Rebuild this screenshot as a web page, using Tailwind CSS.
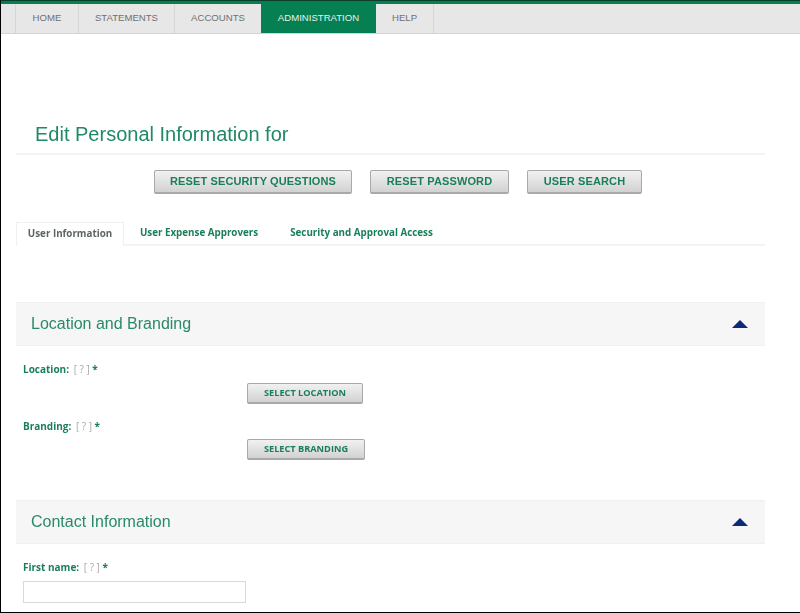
<!DOCTYPE html>
<html lang="en">
<head>
  <meta charset="UTF-8" />
  <title>Edit Personal Information</title>
  <script src="https://cdn.jsdelivr.net/npm/@tailwindcss/browser@4"></script>
</head>
<body class="bg-white">
  <div class="w-[800px] h-[613px] overflow-hidden flex flex-col border-l border-b border-t border-l-black border-b-black border-t-[#0a3d28] font-['Liberation_Sans',sans-serif] blur-[0.35px]">

    <!-- top nav -->
    <div class="border-t-[3px] border-[#067f53] shrink-0">
      <nav class="flex h-[30px] pl-[14px] bg-[#e7e7e7] border-b border-[#d4d4d4] text-[9.6px] text-[#707070]">
        <a class="w-[63px] flex items-center justify-center border-l border-[#d6d6d6]">HOME</a>
        <a class="w-[96px] flex items-center justify-center border-l border-[#d6d6d6]">STATEMENTS</a>
        <a class="w-[87px] flex items-center justify-center border-l border-[#d6d6d6]">ACCOUNTS</a>
        <a class="w-[115px] flex items-center justify-center bg-[#067f53] text-[#e4f3ec]">ADMINISTRATION</a>
        <a class="w-[58px] flex items-center justify-center border-r border-[#d6d6d6]">HELP</a>
      </nav>
    </div>

    <main class="w-[749px] ml-[15px]">
      <h1 class="mt-[88px] pl-[19px] h-[33px] border-b-2 border-[#f3f3f3] text-[20px] leading-[24px] text-[#1f8a63]">Edit Personal Information for</h1>

      <div class="flex mt-[15px] ml-[138px] gap-[18px] text-[11px] font-bold tracking-[0.13px] text-[#1a7f58]">
        <button class="w-[198px] h-[24px] rounded-[2px] border border-[#a9a9a9] border-b-2 bg-gradient-to-b from-[#f1f1f1] to-[#d2d2d2]">RESET SECURITY QUESTIONS</button>
        <button class="w-[139px] h-[24px] rounded-[2px] border border-[#a9a9a9] border-b-2 bg-gradient-to-b from-[#f1f1f1] to-[#d2d2d2]">RESET PASSWORD</button>
        <button class="w-[115px] h-[24px] rounded-[2px] border border-[#a9a9a9] border-b-2 bg-gradient-to-b from-[#f1f1f1] to-[#d2d2d2]">USER SEARCH</button>
      </div>

      <div class="flex mt-[28px] h-[24px] border-b-2 border-[#f3f3f3] font-['Open_Sans',sans-serif] text-[9.8px] font-bold text-[#1a7f58]">
        <a class="w-[108px] h-[24px] flex items-center justify-center bg-white border border-b-0 border-[#f0f0f0] text-[#5c6660]">User Information</a>
        <a class="w-[150px] flex items-center justify-center">User Expense Approvers</a>
        <a class="ml-[2px] w-[171px] flex items-center justify-center">Security and Approval Access</a>
      </div>

      <section class="mt-[56px]">
        <div class="h-[44px] flex items-center justify-between pl-[15px] pr-[17px] bg-[#f6f6f6] border-t border-b border-[#f0f0f0]">
          <h2 class="text-[16px] text-[#2a8a68]">Location and Branding</h2>
          <svg width="16" height="8" viewBox="0 0 16 8"><path d="M8 0L16 8H0Z" fill="#0b2a78"/></svg>
        </div>
        <div class="pl-[7px] h-[154px] font-['Open_Sans',sans-serif] text-[10px]">
          <p class="pt-[16px] h-[37px] leading-[14px]"><b class="text-[#1a7f58]">Location:</b> <span class="ml-[2px] text-[#a8a8a8]">[ ? ]</span> <b class="text-[#1a7f58]">*</b></p>
          <button class="block ml-[224px] w-[116px] h-[21px] rounded-[2px] border border-[#a9a9a9] border-b-2 bg-gradient-to-b from-[#f1f1f1] to-[#d2d2d2] text-[9.2px] font-bold text-[#1a7f58]">SELECT LOCATION</button>
          <p class="mt-[15px] h-[20px] leading-[14px]"><b class="text-[#1a7f58]">Branding:</b> <span class="ml-[2px] text-[#a8a8a8]">[ ? ]</span> <b class="text-[#1a7f58]">*</b></p>
          <button class="block ml-[224px] w-[118px] h-[21px] rounded-[2px] border border-[#a9a9a9] border-b-2 bg-gradient-to-b from-[#f1f1f1] to-[#d2d2d2] text-[9.2px] font-bold text-[#1a7f58]">SELECT BRANDING</button>
        </div>
      </section>

      <section>
        <div class="h-[44px] flex items-center justify-between pl-[15px] pr-[17px] bg-[#f6f6f6] border-t border-b border-[#f0f0f0]">
          <h2 class="text-[16px] text-[#2a8a68]">Contact Information</h2>
          <svg width="16" height="8" viewBox="0 0 16 8"><path d="M8 0L16 8H0Z" fill="#0b2a78"/></svg>
        </div>
        <div class="pl-[7px] font-['Open_Sans',sans-serif] text-[10px]">
          <p class="pt-[16px] h-[37px] leading-[14px]"><b class="text-[#1a7f58]">First name:</b> <span class="ml-[2px] text-[#a8a8a8]">[ ? ]</span> <b class="text-[#1a7f58]">*</b></p>
          <input type="text" class="block w-[223px] h-[22px] bg-white border border-[#d9d9d9]" />
        </div>
      </section>
    </main>
  </div>
</body>
</html>
